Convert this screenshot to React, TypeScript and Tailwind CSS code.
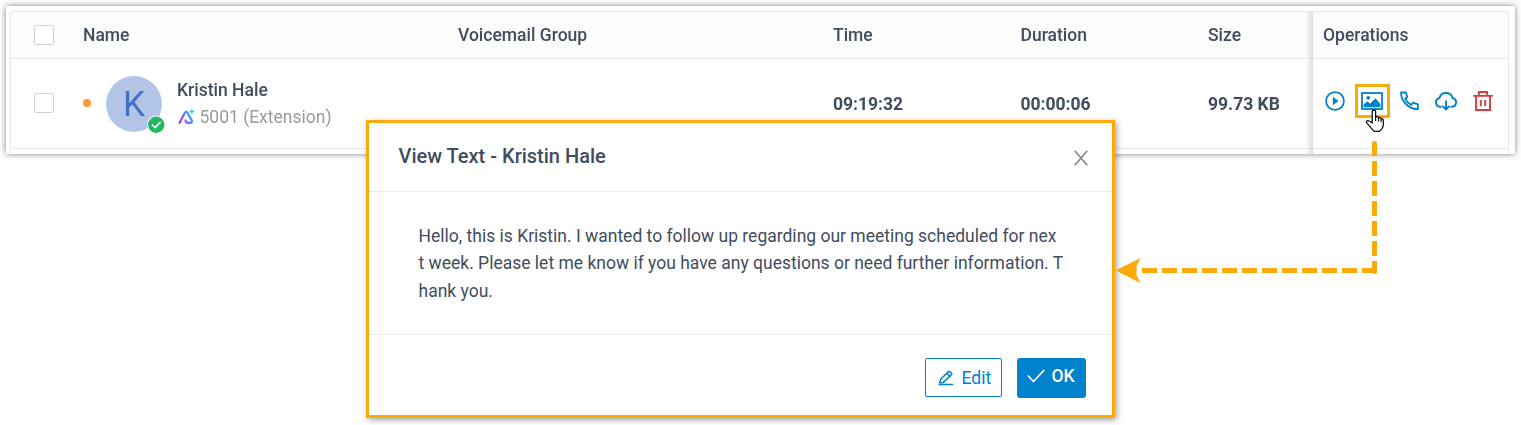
import React from "react";

const columns = "grid grid-cols-[72px_375px_375px_187.5px_187.5px_105px_196px]";

function Checkbox() {
  return <span className="block h-5 w-5 rounded-[2px] border border-[#d0d2e2] bg-white" />;
}

function BrandMark() {
  return (
    <svg width="18" height="16" viewBox="0 0 18 16" fill="none" className="shrink-0">
      <defs>
        <linearGradient id="brand" x1="1" y1="15" x2="15" y2="3" gradientUnits="userSpaceOnUse">
          <stop stopColor="#b429f5" />
          <stop offset="0.5" stopColor="#6c6cfb" />
          <stop offset="1" stopColor="#29bff5" />
        </linearGradient>
      </defs>
      <path d="M2.6 13.8 8 3.6Q9.2 1.6 10.4 3.6L14.8 11.6Q15.6 13.8 13.4 13.8H10.4Q8.8 13.4 8.4 11.4" stroke="url(#brand)" strokeWidth="2.2" strokeLinecap="round" strokeLinejoin="round" />
      <path d="M14.8 0Q15.1 2.2 17.4 2.6 15.1 3 14.8 5.2 14.5 3 12.2 2.6 14.5 2.2 14.8 0Z" fill="#10e0ea" stroke="#10e0ea" strokeWidth=".5" />
    </svg>
  );
}

function PlayIcon() {
  return (
    <svg width="20" height="20" viewBox="0 0 20 20" fill="none">
      <circle cx="10" cy="10" r="8.9" stroke="#0081cc" strokeWidth="1.8" />
      <path d="M7.8 5.8 13.6 10 7.8 14.2Z" fill="#0081cc" />
    </svg>
  );
}

function TextImageIcon() {
  return (
    <svg width="22" height="18" viewBox="0 0 22 18" fill="none">
      <rect x="1" y="1" width="20" height="16" stroke="#0081cc" strokeWidth="1.8" />
      <circle cx="7.2" cy="5.8" r="1.9" fill="#0081cc" />
      <path d="M2.6 15.2V12.6L6.5 9.2 9 11.8 14.5 6.3 19.4 12V15.2Z" fill="#0081cc" />
    </svg>
  );
}

function PhoneIcon() {
  return (
    <svg width="19" height="19" viewBox="0 0 19 19" fill="none">
      <path d="M1 1.5H5.9L7.3 6.1 5.1 8Q7.2 11.7 11.2 13.9L13.2 11.6 17.9 13.4V18Q11.2 18.3 6.3 13.5 1 8.3 1 1.5Z" stroke="#0081cc" strokeWidth="1.8" strokeLinejoin="round" />
    </svg>
  );
}

function DownloadIcon() {
  return (
    <svg width="22" height="20" viewBox="0 0 22 20" fill="none" stroke="#0081cc" strokeWidth="1.9">
      <path d="M6.4 15.8H5.4A4.4 4.4 0 0 1 4.4 7.1 6.8 6.8 0 0 1 17.6 7.1 4.4 4.4 0 0 1 16.6 15.8H15.6" />
      <path d="M11 9.5V18.5M7.4 14.8 11 18.5 14.6 14.8" />
    </svg>
  );
}

function TrashIcon() {
  return (
    <svg width="20" height="20" viewBox="0 0 20 20" fill="none" stroke="#d93a3f" strokeWidth="1.9">
      <path d="M.2 4.9H19.8M5.9 4.9V1H14.1V4.9M3 4.9V19H17V4.9M7.8 9V15.2M12.2 9V15.2" />
    </svg>
  );
}

function EditIcon() {
  return (
    <svg width="16" height="16" viewBox="0 0 16 16" fill="none" stroke="#0081cc" strokeWidth="1.5">
      <path d="M1.8 12.8 2.7 9.3 10.3 1.7Q11 1 11.8 1.7L13.4 3.3Q14.1 4 13.4 4.8L5.4 12.4Z" strokeLinejoin="round" />
      <path d="M8.9 3.2 12 6.3M.5 14.4H15.2" />
    </svg>
  );
}

function Connector() {
  return (
    <svg className="pointer-events-none absolute left-[1110px] top-[135px]" width="280" height="155" viewBox="1110 135 280 155" fill="none">
      <path d="M1374.5 144V156" stroke="#faab0a" strokeWidth="5" />
      <path d="M1372 145V143Q1372 141 1374.5 141T1377 143V145Z" fill="#faab0a" />
      <path d="M1374.5 161V272" stroke="#faab0a" strokeWidth="5" strokeDasharray="15 5" />
      <path d="M1142 270.5H1377" stroke="#faab0a" strokeWidth="5" strokeDasharray="15 5" />
      <path d="M1372 269H1377V272Q1377 274 1374.5 274T1372 272Z" fill="#faab0a" />
      <path d="M1115.5 270.5 1140.5 258 1136.5 266V275L1140.5 283Z" fill="#faab0a" />
    </svg>
  );
}

function HandPointer() {
  return (
    <svg className="pointer-events-none absolute left-[1365px] top-[109px]" width="20" height="24" viewBox="0 0 20 24">
      <path d="M7.2 14V2.8Q7.2 1 8.9 1T10.6 2.8V8.2Q12.8 6.9 13.6 8.8 15.5 7.9 16.2 9.8 18.3 9.4 18.3 11.6V15.4Q18.3 17.4 17 19.6L14.6 22.4H9.2Q6.6 19.8 4.2 16.6L1.6 13.6Q1 12 2.6 11.6 4.4 11.4 7.2 14Z" fill="white" stroke="#111" strokeWidth="1.3" strokeLinejoin="round" />
      <path d="M10.6 8V12M13.5 9V12.4M16.1 10V13" stroke="#111" strokeWidth="1.2" />
    </svg>
  );
}

function VoicemailTable() {
  return (
    <section className="ml-1.5 h-[148px] w-[1509px] overflow-hidden bg-white pl-1 pt-[5px]">
      <div className="relative h-[143px] w-[1499px] overflow-hidden rounded-tl-[3px] border-x border-t border-[#e6e8f3]">
        <div className={`${columns} h-[47px] items-center border-b border-[#e6e8f3] bg-[#fcfcfc] font-medium`}>
          <div className="pl-[23px]"><Checkbox /></div>
          <div>Name</div>
          <div>Voicemail Group</div>
          <div>Time</div>
          <div>Duration</div>
          <div>Size</div>
          <div className="pl-[10px]">Operations</div>
        </div>
        <div className={`${columns} h-[90px] items-center border-b border-[#e6e8f3]`}>
          <div className="pb-0.5 pl-[23px]"><Checkbox /></div>
          <div className="flex items-center">
            <span className="mb-px h-2 w-2 rounded-full bg-[#ff9732]" />
            <div className="relative ml-[15px] flex h-14 w-14 items-center justify-center rounded-full bg-[#b3c5e7] pt-0.5 text-[35px] text-[#4270c8]">
              K
              <svg className="absolute left-[41px] top-[39px]" width="19" height="19" viewBox="0 0 19 19" fill="none">
                <circle cx="9.2" cy="9.7" r="9.2" fill="white" />
                <circle cx="9.2" cy="9.7" r="8.2" fill="#20b860" />
                <path d="M5 9.7 8.1 12.6 13.6 6.9" stroke="white" strokeWidth="1.7" />
              </svg>
            </div>
            <div className="ml-[15px] flex flex-col">
              <span className="h-[27px] font-medium leading-[27px]">Kristin Hale</span>
              <span className="flex h-[27px] items-center gap-[4.5px] text-[#999] leading-[27px]"><BrandMark />5001 (Extension)</span>
            </div>
          </div>
          <div />
          <div className="font-bold">09:19:32</div>
          <div className="font-bold">00:00:06</div>
          <div className="font-bold">99.73 KB</div>
          <div className="flex items-center pb-1.5 pl-[12px]">
            <PlayIcon />
            <span className="ml-[10px] flex h-[34px] w-[35px] items-center border-3 border-[#faab0a] pl-[3px]"><TextImageIcon /></span>
            <span className="ml-[10px]"><PhoneIcon /></span>
            <span className="ml-[16px]"><DownloadIcon /></span>
            <span className="ml-[16px]"><TrashIcon /></span>
          </div>
        </div>
        <div className="pointer-events-none absolute left-[1294px] top-0 h-full w-2 bg-linear-to-r from-transparent to-black/12" />
      </div>
    </section>
  );
}

function TextDialog() {
  return (
    <section className="absolute left-[366px] top-[120px] flex h-[298px] w-[749px] flex-col border-3 border-[#faab0a] bg-white shadow-[2px_2px_6px_rgba(0,0,0,0.35)]">
      <header className="flex h-[69px] items-center justify-between border-b border-[#e8eaf0] pl-[29.5px] pr-[24px]">
        <h2 className="pb-0.5 text-[20px] font-medium leading-7">View Text - Kristin Hale</h2>
        <svg width="14" height="16" viewBox="0 0 14 16" fill="none" className="mt-0.5" stroke="#888" strokeWidth="1.7"><path d="M.8.8 13.2 15.2M13.2.8.8 15.2" /></svg>
      </header>
      <div className="h-[143px] border-b border-[#e8eaf0] pl-[49.5px] pt-[30.7px] text-[17.5px] leading-[27.5px]">
        <p>Hello, this is Kristin. I wanted to follow up regarding our meeting scheduled for nex<br />t week. Please let me know if you have any questions or need further information. T<br />hank you.</p>
      </div>
      <footer className="flex items-start justify-end gap-[15px] pr-[26px] pt-[23px]">
        <button className="flex h-[39px] w-[77px] items-center gap-[7.5px] rounded-[2px] border border-[#0081cc] bg-white pl-[12px] text-[#0081cc]"><EditIcon />Edit</button>
        <button className="flex h-10 w-[69px] items-center gap-[6.5px] rounded-[3px] bg-[#0081cc] pb-1 pl-[10px] font-medium text-white">
          <svg width="18" height="14" viewBox="0 0 18 14" fill="none" stroke="white" strokeWidth="1.8"><path d="M.8 6.5 6.5 12.5 17.2 1" /></svg>
          OK
        </button>
      </footer>
    </section>
  );
}

export default function App() {
  return (
    <main className="relative h-[425px] w-[1521px] overflow-hidden bg-white pt-1.5 font-[Roboto,sans-serif] text-[17.5px] leading-6 text-[#414d5e]">
      <div className="w-fit drop-shadow-[0_0_3px_rgba(0,0,0,0.5)]">
        <VoicemailTable />
      </div>
      <TextDialog />
      <Connector />
      <HandPointer />
    </main>
  );
}
